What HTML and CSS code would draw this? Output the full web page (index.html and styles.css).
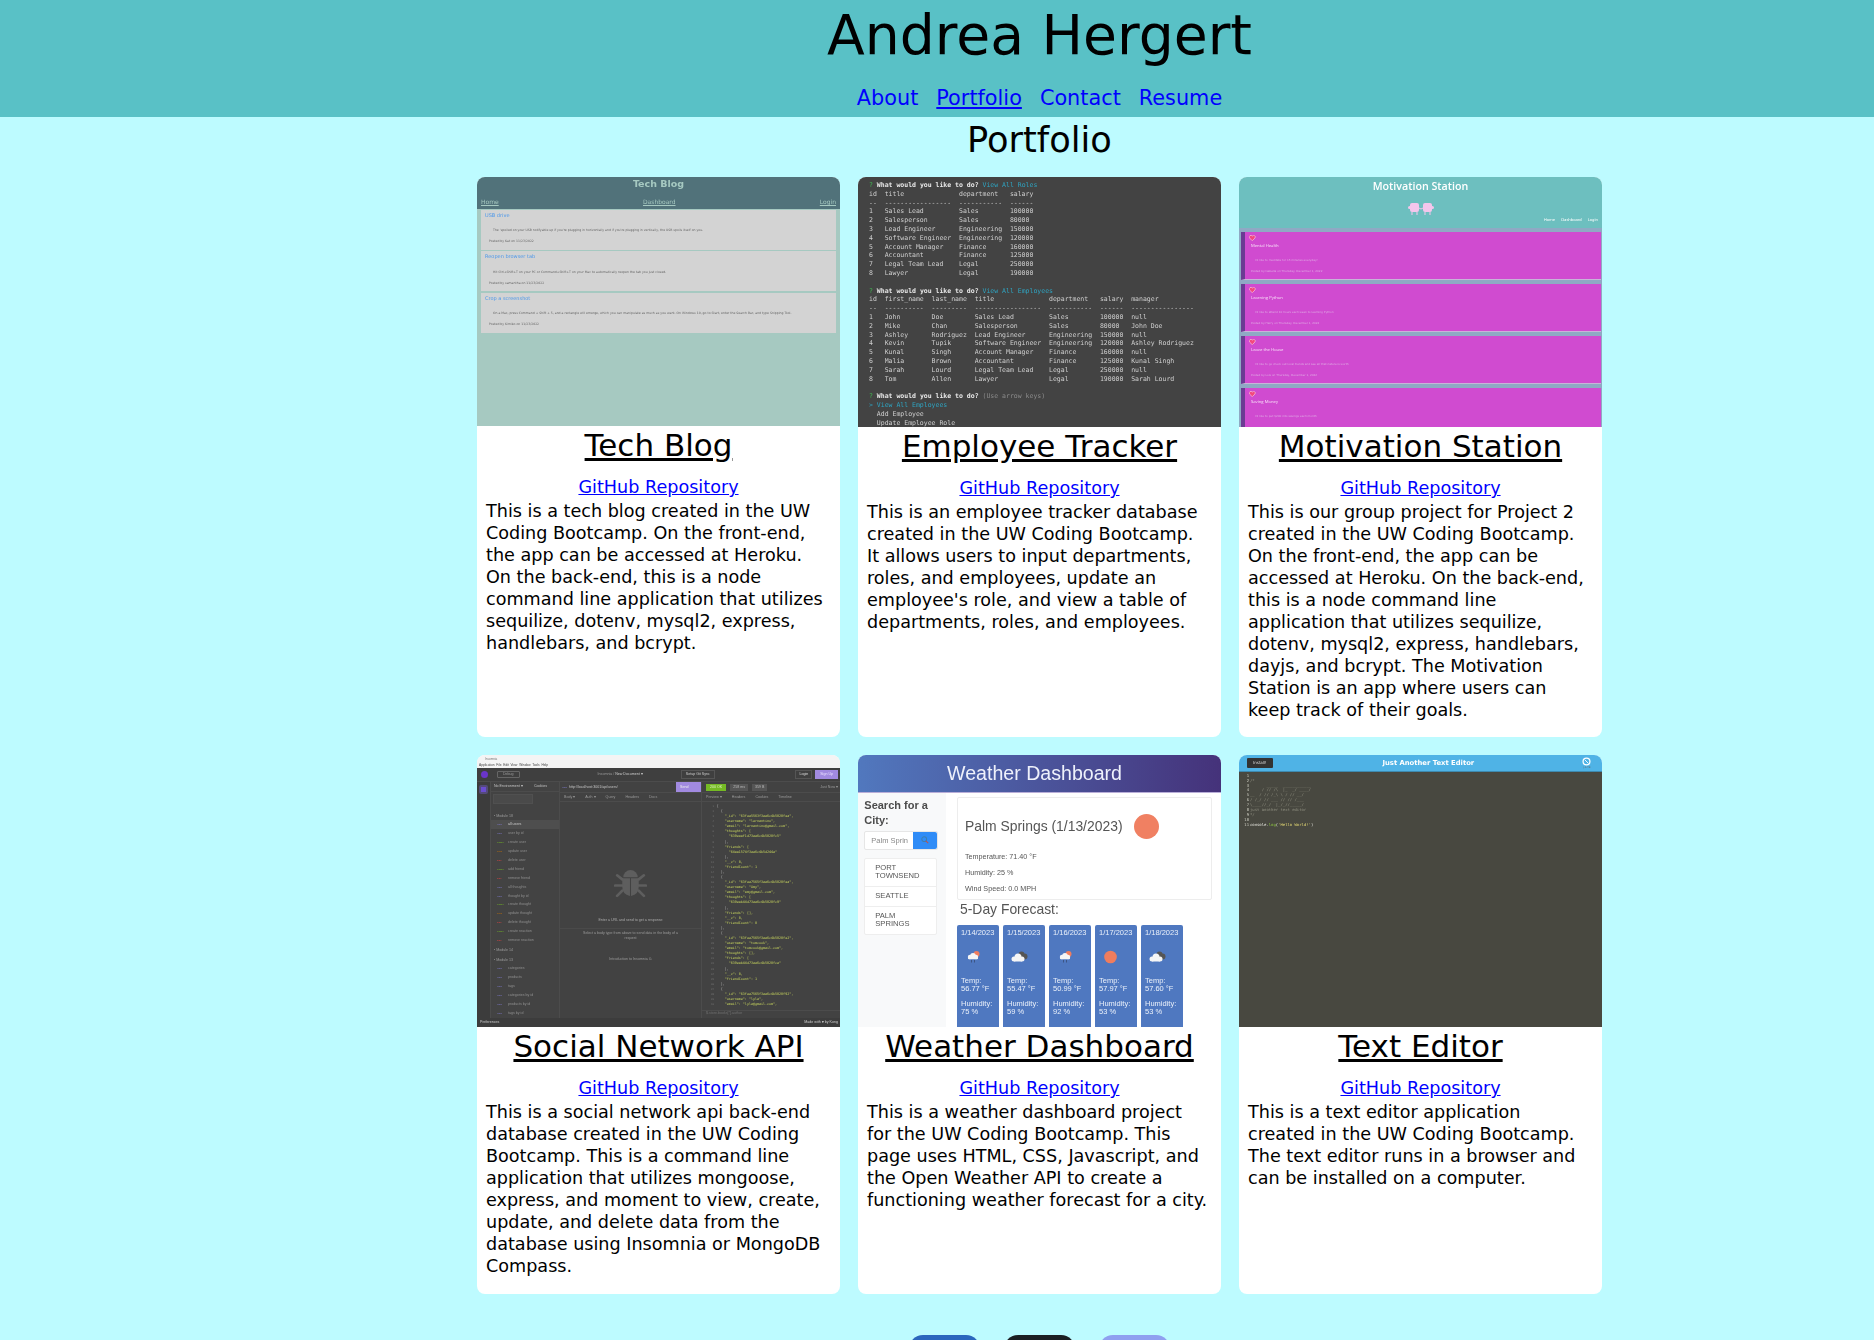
FILE: index.html
```html
<!DOCTYPE html>
<html lang="en">
<head>
<meta charset="utf-8">
<title>Andrea Hergert</title>
<link rel="stylesheet" href="styles.css">
</head>
<body>
<header class="site-header">
  <h1 class="site-name">Andrea Hergert</h1>
  <nav class="site-nav">
    <a href="#about">About</a>
    <a href="#portfolio" class="current">Portfolio</a>
    <a href="#contact">Contact</a>
    <a href="#resume">Resume</a>
  </nav>
</header>
<main class="content">
  <h2 class="section-title">Portfolio</h2>
  <section class="grid">

    <article class="card">
      <div class="shot blog shot-a">
        <div class="blog-head">
          <div class="blog-title">Tech Blog</div>
          <div class="blog-nav"><span>Home</span><span>Dashboard</span><span>Login</span></div>
        </div>
        <div class="blog-posts">
          <div class="blog-post"><div class="blog-post-title">USB drive</div><p class="blog-post-text">The ‘spoiled on your USB notifyable up if you're plugging in horizontally and if you're plugging in vertically, the USB spoils itself on you.</p><p class="blog-post-by">Posted by Kat on 11/23/2022</p></div>
          <div class="blog-post"><div class="blog-post-title">Reopen browser tab</div><p class="blog-post-text">Hit Ctrl+Shift+T on your PC or Command+Shift+T on your Mac to automatically reopen the tab you just closed.</p><p class="blog-post-by">Posted by samantha on 11/23/2022</p></div>
          <div class="blog-post"><div class="blog-post-title">Crop a screenshot</div><p class="blog-post-text">On a Mac, press Command + Shift + 5, and a rectangle will emerge, which you can manipulate as much as you want. On Windows 10, go to Start, enter the Search Bar, and type Snipping Tool.</p><p class="blog-post-by">Posted by Kimiko on 11/23/2022</p></div>
        </div>
      </div>
      <h3 class="card-title"><a href="#tech-blog">Tech Blog</a></h3>
      <a class="repo" href="#repo">GitHub Repository</a>
      <p class="card-text">This is a tech blog created in the UW Coding Bootcamp. On the front-end, the app can be accessed at Heroku. On the back-end, this is a node command line application that utilizes sequilize, dotenv, mysql2, express, handlebars, and bcrypt.</p>
    </article>

    <article class="card">
      <div class="shot term"><pre class="term-text"><span class="g">?</span> <b>What would you like to do?</b> <span class="c">View All Roles</span>
id  title              department   salary
--  -----------------  -----------  ------
1   Sales Lead         Sales        100000
2   Salesperson        Sales        80000
3   Lead Engineer      Engineering  150000
4   Software Engineer  Engineering  120000
5   Account Manager    Finance      160000
6   Accountant         Finance      125000
7   Legal Team Lead    Legal        250000
8   Lawyer             Legal        190000

<span class="g">?</span> <b>What would you like to do?</b> <span class="c">View All Employees</span>
id  first_name  last_name  title              department   salary  manager
--  ----------  ---------  -----------------  -----------  ------  ----------------
1   John        Doe        Sales Lead         Sales        100000  null
2   Mike        Chan       Salesperson        Sales        80000   John Doe
3   Ashley      Rodriguez  Lead Engineer      Engineering  150000  null
4   Kevin       Tupik      Software Engineer  Engineering  120000  Ashley Rodriguez
5   Kunal       Singh      Account Manager    Finance      160000  null
6   Malia       Brown      Accountant         Finance      125000  Kunal Singh
7   Sarah       Lourd      Legal Team Lead    Legal        250000  null
8   Tom         Allen      Lawyer             Legal        190000  Sarah Lourd

<span class="g">?</span> <b>What would you like to do?</b> <span class="m">(Use arrow keys)</span>
<span class="c">&gt; View All Employees</span>
  Add Employee
  Update Employee Role</pre></div>
      <h3 class="card-title"><a href="#employee-tracker">Employee Tracker</a></h3>
      <a class="repo" href="#repo">GitHub Repository</a>
      <p class="card-text">This is an employee tracker database created in the UW Coding Bootcamp. It allows users to input departments, roles, and employees, update an employee's role, and view a table of departments, roles, and employees.</p>
    </article>

    <article class="card">
      <div class="shot moti">
        <div class="moti-head">
          <div class="moti-title">Motivation Station</div>
          <svg class="moti-logo" viewBox="0 0 26 14" aria-hidden="true"><rect x="2" y="2" width="9" height="9" rx="2" fill="#f4c6ec"/><rect x="15" y="2" width="9" height="9" rx="2" fill="#f4c6ec"/><rect x="0" y="5" width="3" height="3" rx="1.5" fill="#f4c6ec"/><rect x="23" y="5" width="3" height="3" rx="1.5" fill="#f4c6ec"/><path d="M11 7q2 2 4 0" stroke="#f4c6ec" fill="none"/><path d="M4 11v3M9 11v3M17 11v3M22 11v3" stroke="#f4c6ec"/></svg>
          <div class="moti-nav"><span>Home</span><span>Dashboard</span><span>Login</span></div>
        </div>
        <div class="moti-list">
        <div class="moti-card"><svg class="heart" viewBox="0 0 12 11" aria-hidden="true"><path d="M6 10.5 1 5.5A3 3 0 0 1 6 2a3 3 0 0 1 5 3.500Z" fill="#f2487e" stroke="#f8cde6" stroke-width="1.200"/></svg><div class="moti-name">Mental Health</div><p class="moti-text">I'd like to meditate for 15 minutes everyday!</p><p class="moti-by">Posted by Isabella on Thursday, December 1, 2022</p></div>
        <div class="moti-card"><svg class="heart" viewBox="0 0 12 11" aria-hidden="true"><path d="M6 10.5 1 5.5A3 3 0 0 1 6 2a3 3 0 0 1 5 3.500Z" fill="#f2487e" stroke="#f8cde6" stroke-width="1.200"/></svg><div class="moti-name">Learning Python</div><p class="moti-text">I'd like to attend 10 hours each week to learning Python</p><p class="moti-by">Posted by Harry on Thursday, December 1, 2022</p></div>
        <div class="moti-card"><svg class="heart" viewBox="0 0 12 11" aria-hidden="true"><path d="M6 10.5 1 5.5A3 3 0 0 1 6 2a3 3 0 0 1 5 3.500Z" fill="#f2487e" stroke="#f8cde6" stroke-width="1.200"/></svg><div class="moti-name">Leave the House</div><p class="moti-text">I'd like to go check out local trends and see all that nature is worth</p><p class="moti-by">Posted by Lois on Thursday, December 1, 2022</p></div>
        <div class="moti-card"><svg class="heart" viewBox="0 0 12 11" aria-hidden="true"><path d="M6 10.5 1 5.5A3 3 0 0 1 6 2a3 3 0 0 1 5 3.500Z" fill="#f2487e" stroke="#f8cde6" stroke-width="1.200"/></svg><div class="moti-name">Saving Money</div><p class="moti-text">I'd like to put $200 into savings each month</p></div>
        </div>
      </div>
      <h3 class="card-title"><a href="#motivation-station">Motivation Station</a></h3>
      <a class="repo" href="#repo">GitHub Repository</a>
      <p class="card-text">This is our group project for Project 2 created in the UW Coding Bootcamp. On the front-end, the app can be accessed at Heroku. On the back-end, this is a node command line application that utilizes sequilize, dotenv, mysql2, express, handlebars, dayjs, and bcrypt. The Motivation Station is an app where users can keep track of their goals.</p>
    </article>

    <article class="card">
      <div class="shot shot-tall ins">
        <div class="ins-title"><div class="ins-titlebar">Insomnia</div><div class="ins-menu">Application&nbsp; File&nbsp; Edit&nbsp; View&nbsp; Window&nbsp; Tools&nbsp; Help</div></div>
        <div class="ins-top"><span class="ins-logo"></span><span class="ins-pill">Debug</span><span class="ins-crumb">Insomnia / <b>New Document ▾</b></span><span class="ins-setup">Setup Git Sync</span><span class="ins-login">Login</span><span class="ins-signup">Sign Up</span></div>
        <div class="ins-body">
          <div class="ins-rail"><span class="ins-home"></span></div>
          <div class="ins-side">
            <div class="ins-env"><span>No Environment ▾</span><span>Cookies</span></div>
            <div class="ins-filter"></div>
            <div class="ins-folder">▪ Module 18</div>
            <div class="ins-row active"><i class="v">GET</i>all users</div>
            <div class="ins-row"><i class="v">GET</i>user by id</div>
            <div class="ins-row"><i class="n">POST</i>create user</div>
            <div class="ins-row"><i class="o">PUT</i>update user</div>
            <div class="ins-row"><i class="r">DEL</i>delete user</div>
            <div class="ins-row"><i class="n">POST</i>add friend</div>
            <div class="ins-row"><i class="r">DEL</i>remove friend</div>
            <div class="ins-row"><i class="v">GET</i>all thoughts</div>
            <div class="ins-row"><i class="v">GET</i>thought by id</div>
            <div class="ins-row"><i class="n">POST</i>create thought</div>
            <div class="ins-row"><i class="o">PUT</i>update thought</div>
            <div class="ins-row"><i class="r">DEL</i>delete thought</div>
            <div class="ins-row"><i class="n">POST</i>create reaction</div>
            <div class="ins-row"><i class="r">DEL</i>remove reaction</div>
            <div class="ins-folder">▪ Module 14</div>
            <div class="ins-folder">▪ Module 13</div>
            <div class="ins-row"><i class="v">GET</i>categories</div>
            <div class="ins-row"><i class="v">GET</i>products</div>
            <div class="ins-row"><i class="v">GET</i>tags</div>
            <div class="ins-row"><i class="v">GET</i>categories by id</div>
            <div class="ins-row"><i class="v">GET</i>products by id</div>
            <div class="ins-row"><i class="v">GET</i>tags by id</div>
          </div>
          <div class="ins-mid">
            <div class="ins-url"><span><i class="v">GET</i> http://localhost:3001/api/users/</span><span class="ins-send">Send</span></div>
            <div class="ins-tabs"><span>Body ▾</span><span>Auth ▾</span><span>Query</span><span>Headers</span><span>Docs</span></div>
            <div class="ins-empty">
              <svg class="ins-bug" viewBox="0 0 32 32" aria-hidden="true"><path d="M9 10a7 7 0 0 1 14 0Z" fill="#5e5e5e"/><path d="M8 11h7.500v17Q8 27 8 19Zm16 0h-7.500v17Q24 27 24 19Z" fill="#5e5e5e"/><path d="M8 12 3 8M24 12l5-4M8 18H1M24 18h7M8 23l-5 5M24 23l5 5" stroke="#5e5e5e" stroke-width="2.500" stroke-linecap="round"/></svg>
              <div class="ins-hint">Enter a URL and send to get a response</div>
              <div class="ins-sel">Select a body type from above to send data in the body of a request</div>
              <div class="ins-intro">Introduction to Insomnia ⧉</div>
            </div>
          </div>
          <div class="ins-right">
            <div class="ins-status"><span class="ins-ok">200 OK</span><span class="ins-chip">258 ms</span><span class="ins-chip">359 B</span><span class="ins-just">Just Now ▾</span></div>
            <div class="ins-tabs"><span>Preview ▾</span><span>Headers</span><span>Cookies</span><span>Timeline</span></div>
            <div class="ins-code">
              <div class="jl"><span class="jn">1</span><span>[</span></div>
              <div class="jl"><span class="jn">2</span><span>  {</span></div>
              <div class="jl"><span class="jn">3</span><span class="k">    "_id": "63fea5563f3aa6c4b5020fea",</span></div>
              <div class="jl"><span class="jn">4</span><span class="k">    "username": "lernantino",</span></div>
              <div class="jl"><span class="jn">5</span><span class="k">    "email": "lernantino@gmail.com",</span></div>
              <div class="jl"><span class="jn">6</span><span class="k">    "thoughts": [</span></div>
              <div class="jl"><span class="jn">7</span><span class="k">      "639eaaf1d73aa6c4b5020fc5"</span></div>
              <div class="jl"><span class="jn">8</span><span>    ],</span></div>
              <div class="jl"><span class="jn">9</span><span class="k">    "friends": [</span></div>
              <div class="jl"><span class="jn">10</span><span class="k">      "64aa1574f3aa6c4b5d244a"</span></div>
              <div class="jl"><span class="jn">11</span><span>    ],</span></div>
              <div class="jl"><span class="jn">12</span><span class="k">    "__v": 0,</span></div>
              <div class="jl"><span class="jn">13</span><span class="k">    "friendCount": 1</span></div>
              <div class="jl"><span class="jn">14</span><span>  },</span></div>
              <div class="jl"><span class="jn">15</span><span>  {</span></div>
              <div class="jl"><span class="jn">16</span><span class="k">    "_id": "63fea7565f3aa6c4b5020fea",</span></div>
              <div class="jl"><span class="jn">17</span><span class="k">    "username": "Amy",</span></div>
              <div class="jl"><span class="jn">18</span><span class="k">    "email": "amy@gmail.com",</span></div>
              <div class="jl"><span class="jn">19</span><span class="k">    "thoughts": [</span></div>
              <div class="jl"><span class="jn">20</span><span class="k">      "639eab44d73aa6c4b5020fc9"</span></div>
              <div class="jl"><span class="jn">21</span><span>    ],</span></div>
              <div class="jl"><span class="jn">22</span><span class="k">    "friends": [],</span></div>
              <div class="jl"><span class="jn">23</span><span class="k">    "__v": 0,</span></div>
              <div class="jl"><span class="jn">24</span><span class="k">    "friendCount": 0</span></div>
              <div class="jl"><span class="jn">25</span><span>  },</span></div>
              <div class="jl"><span class="jn">26</span><span>  {</span></div>
              <div class="jl"><span class="jn">27</span><span class="k">    "_id": "63fea7565f3aa6c4b5020fe2",</span></div>
              <div class="jl"><span class="jn">28</span><span class="k">    "username": "tomcook",</span></div>
              <div class="jl"><span class="jn">29</span><span class="k">    "email": "tomcook@gmail.com",</span></div>
              <div class="jl"><span class="jn">30</span><span class="k">    "thoughts": [],</span></div>
              <div class="jl"><span class="jn">31</span><span class="k">    "friends": [</span></div>
              <div class="jl"><span class="jn">32</span><span class="k">      "639eab44d73aa6c4b5020fca"</span></div>
              <div class="jl"><span class="jn">33</span><span>    ],</span></div>
              <div class="jl"><span class="jn">34</span><span class="k">    "__v": 0,</span></div>
              <div class="jl"><span class="jn">35</span><span class="k">    "friendCount": 1</span></div>
              <div class="jl"><span class="jn">36</span><span>  },</span></div>
              <div class="jl"><span class="jn">37</span><span>  {</span></div>
              <div class="jl"><span class="jn">38</span><span class="k">    "_id": "63fea7565f3aa6c4b5020f92",</span></div>
              <div class="jl"><span class="jn">39</span><span class="k">    "username": "lyla",</span></div>
              <div class="jl"><span class="jn">40</span><span class="k">    "email": "lyla@gmail.com",</span></div>
            </div>
            <div class="ins-query">$.store.books[*].author</div>
          </div>
        </div>
        <div class="ins-foot"><span>Preferences</span><span>Made with ♥ by Kong</span></div>
      </div>
      <h3 class="card-title"><a href="#social-network-api">Social Network API</a></h3>
      <a class="repo" href="#repo">GitHub Repository</a>
      <p class="card-text">This is a social network api back-end database created in the UW Coding Bootcamp. This is a command line application that utilizes mongoose, express, and moment to view, create, update, and delete data from the database using Insomnia or MongoDB Compass.</p>
    </article>

    <article class="card">
      <div class="shot shot-tall wx">
        <div class="wx-head">Weather Dashboard</div>
        <div class="wx-body">
          <aside class="wx-side">
            <div class="wx-search">Search for a City:</div>
            <div class="wx-input"><span class="wx-field">Palm Sprin</span><span class="wx-btn"><svg viewBox="0 0 10 10" aria-hidden="true"><circle cx="4" cy="4" r="3" fill="none" stroke="#3c7fb0" stroke-width="1.300"/><path d="m6 6 3 3" stroke="#c0504d" stroke-width="1.300"/></svg></span></div>
            <ul class="wx-list"><li>PORT TOWNSEND</li><li>SEATTLE</li><li>PALM SPRINGS</li></ul>
          </aside>
          <div class="wx-main">
            <div class="wx-now">
              <div class="wx-city"><span>Palm Springs (1/13/2023)</span><span class="wx-sun"></span></div>
              <p>Temperature: 71.40 °F</p><p>Humidity: 25 %</p><p>Wind Speed: 0.0 MPH</p>
            </div>
            <div class="wx-five">5-Day Forecast:</div>
            <div class="wx-days">
              <div class="wx-day"><div>1/14/2023</div><svg class="wx-ico" viewBox="0 0 18 14" aria-hidden="true"><circle cx="11.500" cy="4" r="3" fill="#ef7d5e"/><circle cx="5" cy="7" r="2.200" fill="#f5f5f5"/><circle cx="8" cy="5.800" r="2.800" fill="#f5f5f5"/><circle cx="11" cy="7" r="2.200" fill="#f5f5f5"/><rect x="3" y="6.500" width="10" height="2.700" rx="1" fill="#f5f5f5"/><path d="M6.500 10v2.500M9.500 10v2.500" stroke="#33466b" stroke-width=".7"/></svg><p>Temp:<br>56.77 °F</p><p>Humidity:<br>75 %</p></div>
              <div class="wx-day"><div>1/15/2023</div><svg class="wx-ico" viewBox="0 0 18 14" aria-hidden="true"><circle cx="10.500" cy="4.500" r="3" fill="#555"/><circle cx="13.500" cy="6.500" r="3" fill="#555"/><circle cx="3" cy="9" r="2.500" fill="#f5f5f5"/><circle cx="7" cy="7" r="3.500" fill="#f5f5f5"/><circle cx="11" cy="9" r="2.500" fill="#f5f5f5"/><rect x="3" y="8" width="8" height="3.500" fill="#f5f5f5"/></svg><p>Temp:<br>55.47 °F</p><p>Humidity:<br>59 %</p></div>
              <div class="wx-day"><div>1/16/2023</div><svg class="wx-ico" viewBox="0 0 18 14" aria-hidden="true"><circle cx="11.500" cy="4" r="3" fill="#ef7d5e"/><circle cx="5" cy="7" r="2.200" fill="#f5f5f5"/><circle cx="8" cy="5.800" r="2.800" fill="#f5f5f5"/><circle cx="11" cy="7" r="2.200" fill="#f5f5f5"/><rect x="3" y="6.500" width="10" height="2.700" rx="1" fill="#f5f5f5"/><path d="M6.500 10v2.500M9.500 10v2.500" stroke="#33466b" stroke-width=".7"/></svg><p>Temp:<br>50.99 °F</p><p>Humidity:<br>92 %</p></div>
              <div class="wx-day"><div>1/17/2023</div><svg class="wx-ico" viewBox="0 0 18 14" aria-hidden="true"><circle cx="7.500" cy="7" r="6.300" fill="#ef7d5e"/></svg><p>Temp:<br>57.97 °F</p><p>Humidity:<br>53 %</p></div>
              <div class="wx-day"><div>1/18/2023</div><svg class="wx-ico" viewBox="0 0 18 14" aria-hidden="true"><circle cx="10.500" cy="4.500" r="3" fill="#555"/><circle cx="13.500" cy="6.500" r="3" fill="#555"/><circle cx="3" cy="9" r="2.500" fill="#f5f5f5"/><circle cx="7" cy="7" r="3.500" fill="#f5f5f5"/><circle cx="11" cy="9" r="2.500" fill="#f5f5f5"/><rect x="3" y="8" width="8" height="3.500" fill="#f5f5f5"/></svg><p>Temp:<br>57.60 °F</p><p>Humidity:<br>53 %</p></div>
            </div>
          </div>
        </div>
      </div>
      <h3 class="card-title"><a href="#weather-dashboard">Weather Dashboard</a></h3>
      <a class="repo" href="#repo">GitHub Repository</a>
      <p class="card-text">This is a weather dashboard project for the UW Coding Bootcamp. This page uses HTML, CSS, Javascript, and the Open Weather API to create a functioning weather forecast for a city.</p>
    </article>

    <article class="card">
      <div class="shot shot-tall jate">
        <div class="jate-head"><span class="jate-install">Install!</span><span class="jate-title">Just Another Text Editor</span><span class="jate-logo"><svg viewBox="0 0 10 10" aria-hidden="true"><circle cx="5" cy="5" r="3.800" fill="none" stroke="#fff" stroke-width="1.400"/><path d="M3 3l4 4" stroke="#fff"/></svg><i>J.A.T.E</i></span></div>
        <div class="jate-code"><pre class="jate-gutter">1
2
3
4
5
6
7
8
9
10
11</pre><pre class="jate-text"> 
<span class="dim">/*
       _____  ____________
     / // /\  |_  _/ ____/
__  / // /_\ \ / // __/
/ /_/ // ___ // // /___
\____//_/  |_/_//_____/
just another text editor
*/</span>

console.<span class="lg">log</span>(<span class="st">'Hello World!'</span>)</pre></div>
      </div>
      <h3 class="card-title"><a href="#text-editor">Text Editor</a></h3>
      <a class="repo" href="#repo">GitHub Repository</a>
      <p class="card-text">This is a text editor application created in the UW Coding Bootcamp. The text editor runs in a browser and can be installed on a computer.</p>
    </article>
  </section>
  <footer class="foot">
    <a class="foot-btn li" href="#linkedin" aria-label="LinkedIn"></a>
    <a class="foot-btn gh" href="#github" aria-label="GitHub"></a>
    <a class="foot-btn dc" href="#discord" aria-label="Discord"></a>
  </footer>
</main>
</body>
</html>
```

FILE: styles.css
```css
* { box-sizing: border-box; }
html, body { margin: 0; padding: 0; }
body { background: #bdfbff; font-family: "DejaVu Sans", sans-serif; color: #000; font-size: 17.600px; line-height: 22px; }
.site-header { background: #59c1c6; height: 117px; padding-left: 205px; padding-top: 1px; text-align: center; }
.site-name { margin: 0; font-size: 55.200px; line-height: 68px; font-weight: 400; }
.site-nav { display: flex; justify-content: center; gap: 18px; margin-top: 16px; font-size: 20.800px; line-height: 26px; }
.site-nav a { color: #0000ff; text-decoration: none; }
.site-nav a.current { text-decoration: underline; }
.content { padding-left: 205px; }
.section-title { margin: 0; height: 60px; padding-top: 3px; text-align: center; font-size: 35.200px; line-height: 40px; font-weight: 400; }
.grid { display: grid; grid-template-columns: repeat(3, 363px); gap: 18px; justify-content: center; }
.card { display: flex; flex-direction: column; background: #fff; border-radius: 8px; overflow: hidden; text-align: center; padding-bottom: 16px; }
.card-title { margin: 0; font-size: 31px; line-height: 38px; font-weight: 400; }
.card-title a { color: #000; }
.repo { display: block; margin-top: 12px; margin-bottom: 2px; color: #0000ff; font-size: 17.600px; line-height: 22px; text-align: center; }
.card-text { margin: 0; padding: 0 11px 0 9px; text-align: left; }
.shot-tall ~ .card-text { margin-bottom: 1px; }

.shot { height: 250px; overflow: hidden; flex: none; filter: blur(.35px); text-align: left; }
.shot-a { height: 249px; }
.shot-tall { height: 272px; }

.blog { background: #a6c9c1; }
.blog-head { height: 32px; background: #51727a; color: #a6c9c1; }
.blog-title { text-align: center; font-size: 9.500px; line-height: 13px; font-weight: 700; }
.blog-nav { display: flex; justify-content: space-between; padding: 8px 4px 0; font-size: 6px; line-height: 8px; text-decoration: underline; }
.blog-posts { display: flex; flex-direction: column; gap: 1.500px; padding: .5px 4px 0; }
.blog-post { height: 40px; background: #d3d3d3; padding: 1px 4px 0; color: #666; }
.blog-post-title { color: #4b97ea; font-size: 5px; line-height: 8px; }
.blog-post-text { margin: 8.500px 0 0 8px; font-size: 3.100px; line-height: 6px; white-space: nowrap; }
.blog-post-by { margin: 5.300px 0 0 4px; font-size: 3.100px; line-height: 6px; }

.term { background: #434343; }
.term-text { margin: 0; padding: 4px 0 0 11px; color: #cfcfcf; font-family: "DejaVu Sans Mono", monospace; font-size: 6.500px; line-height: 8.800px; }
.term-text b { color: #e8e8e8; }
.term-text .g { color: #3fb950; }
.term-text .c { color: #2fa3c0; }
.term-text .m { color: #8b8b8b; }

.moti { background: #8fa9c4; }
.moti-head { height: 51px; background: #6dbfbf; color: #fff; display: flex; flex-direction: column; align-items: center; }
.moti-title { font-family: "Open Sans", sans-serif; font-size: 10.700px; line-height: 14px; font-weight: 600; margin-top: 2px; }
.moti-logo { width: 26px; height: 14px; margin-top: 8px; }
.moti-nav { align-self: flex-end; display: flex; gap: 6px; padding-right: 4px; margin-top: 1px; font-size: 3.800px; line-height: 8px; }
.moti-list { display: flex; flex-direction: column; gap: 4px; padding: 3.700px 1px 0 2px; }
.moti-card { height: 48px; flex: none; background: #d04bd0; border-left: 4px solid #6b3b93; border-bottom: 1px solid #c8b4d8; padding: 3px 0 0 4px; color: #dfaae4; overflow: hidden; }
.heart { display: block; width: 6.500px; height: 6px; }
.moti-name { margin: 1px 0 0 2px; font-family: "Open Sans", sans-serif; font-size: 4.200px; line-height: 7px; color: #f8e4f8; }
.moti-text { margin: 9px 0 0 6px; font-size: 2.800px; line-height: 5px; }
.moti-by { margin: 6.300px 0 0 2px; font-size: 2.800px; line-height: 5px; }

.ins { display: flex; flex-direction: column; background: #424242; color: #9a9a9a; font-family: "Liberation Sans", sans-serif; font-size: 3.600px; line-height: 5px; }
.ins-title { height: 13px; background: #f4f4f4; color: #777; flex: none; }
.ins-titlebar { height: 7px; padding: 1px 0 0 8px; line-height: 6px; font-size: 3px; }
.ins-menu { padding-left: 2px; font-size: 3.200px; line-height: 6px; color: #444; }
.ins-top { height: 14px; flex: none; display: flex; align-items: center; gap: 8px; padding: 0 2px 0 2px; background: #3f3f3f; border-bottom: 1px solid #4c4c4c; }
.ins-logo { width: 7px; height: 7px; border-radius: 50%; background: #6a35c9; flex: none; margin-left: 2px; }
.ins-pill { border: 1px solid #666; padding: 0 5px; border-radius: 1px; margin-left: 1px; }
.ins-crumb { margin-left: 70px; }
.ins-crumb b { color: #ccc; font-weight: 400; }
.ins-setup { border: 1px solid #555; padding: 1px 4px; margin-left: 30px; color: #ccc; }
.ins-login { margin-left: auto; border: 1px solid #555; padding: 1px 3px; color: #ddd; }
.ins-signup { background: #a18ae0; color: #e8e0ff; padding: 2px 5px; margin-left: -5px; }
.ins-body { flex: 1; min-height: 0; display: grid; grid-template-columns: 14px 69px 142px 138px; }
.ins-rail { background: #3c3c3c; border-right: 1px solid #4c4c4c; padding: 3px 2px; }
.ins-home { display: block; width: 9px; height: 9px; background: #6a4dd0; border-radius: 2px; border: 2px solid #544a7a; }
.ins-side { overflow: hidden; border-right: 1px solid #4c4c4c; background: #434343; }
.ins-env { height: 10px; display: flex; justify-content: space-between; align-items: center; padding: 0 12px 0 3px; color: #c4c4c4; border-bottom: 1px solid #4c4c4c; }
.ins-filter { height: 10px; width: 40px; margin: 2px 0 6.500px 2px; background: #4a4a4a; border: 1px solid #505050; }
.ins-folder { height: 9.500px; line-height: 10px; padding-left: 3px; color: #9a9a9a; }
.ins-row { height: 8.950px; line-height: 9px; padding-left: 6px; color: #8f8f8f; display: flex; gap: 5px; }
.ins-row.active { background: #4e4e4e; color: #ccc; }
.ins i { font-style: normal; font-size: 2.500px; width: 6px; flex: none; }
.ins-url i { display: inline-block; }
.ins .v { color: #7d78c8; }
.ins .n { color: #75ba24; }
.ins .o { color: #d07502; }
.ins .r { color: #d04444; }
.ins-mid { display: flex; flex-direction: column; overflow: hidden; border-right: 1px solid #4c4c4c; }
.ins-url { height: 10px; flex: none; display: flex; justify-content: space-between; align-items: center; padding-left: 2px; color: #c4c4c4; }
.ins-send { height: 10px; width: 25px; background: #a18ae0; color: #eee; line-height: 10px; padding-left: 4px; }
.ins-tabs { height: 10px; flex: none; display: flex; gap: 10px; align-items: center; padding: 0 4px; border-bottom: 1px solid #4c4c4c; border-top: 1px solid #4c4c4c; }
.ins-empty { flex: 1; display: flex; flex-direction: column; align-items: center; text-align: center; }
.ins-bug { width: 33px; height: 33px; margin-top: 65px; flex: none; }
.ins-hint { margin-top: 18px; color: #aaa; width: 100%; padding-bottom: 5px; border-bottom: 1px solid #4a4a4a; }
.ins-sel { margin-top: 2px; width: 105px; }
.ins-intro { margin-top: 16px; }
.ins-right { display: flex; flex-direction: column; overflow: hidden; min-height: 0; }
.ins-status { height: 10px; flex: none; display: flex; align-items: center; gap: 4px; padding: 0 2px 0 4px; }
.ins-ok { background: #75ba24; color: #dff3c4; padding: 1px 4px; }
.ins-chip { background: #555; color: #bbb; padding: 1px 3px; }
.ins-just { margin-left: auto; }
.ins-code { flex: 1; min-height: 0; padding: 2px 0 0 4px; overflow: hidden; font-family: "DejaVu Sans Mono", monospace; font-size: 3.350px; color: #b9b9b9; }
.jl { display: flex; gap: 2.700px; height: 5.090px; line-height: 5.090px; white-space: pre; }
.jn { width: 8px; flex: none; text-align: right; font-size: 2.400px; color: #777; }
.k { color: #c9d75e; }
.ins-query { height: 8px; flex: none; padding-left: 4px; color: #707070; border-top: 1px solid #4c4c4c; }
.ins-foot { height: 9px; flex: none; display: flex; justify-content: space-between; align-items: center; padding: 0 2px 0 3px; background: #3c3c3c; color: #ccc; }

.wx { display: flex; flex-direction: column; background: #fff; color: #555; font-family: "Liberation Sans", sans-serif; font-size: 7.200px; line-height: 8px; }
.wx-head { height: 37.500px; flex: none; background: linear-gradient(90deg, #5178be, #45327a); border-bottom: 1px solid #b9aed8; color: #eef1fb; font-size: 19.600px; line-height: 36px; text-align: center; padding-right: 10px; }
.wx-body { flex: 1; min-height: 0; display: grid; grid-template-columns: 88px 1fr; }
.wx-side { background: #f8f9fa; padding: 5.700px 7px 0 6.300px; }
.wx-search { font-size: 11px; line-height: 14.700px; font-weight: 700; color: #4c4c4c; }
.wx-input { display: flex; height: 18.600px; margin-top: 3.500px; border: 1px solid #e6e6e6; background: #fff; border-radius: 2px; width: 74px; }
.wx-field { flex: 1; padding-left: 6px; line-height: 17px; color: #8a8a8a; font-size: 7.500px; overflow: hidden; white-space: nowrap; }
.wx-btn { width: 24px; background: #2f8cf7; display: flex; align-items: center; justify-content: center; border-radius: 0 2px 2px 0; }
.wx-btn svg { width: 8px; height: 8px; }
.wx-list { list-style: none; margin: 8px 0 0; padding: 0; width: 73px; background: #fff; border: 1px solid #eee; border-radius: 2px; }
.wx-list li { padding: 5.500px 14px 5.500px 10px; border-top: 1px solid #eee; font-size: 7.600px; line-height: 8px; color: #555; }
.wx-list li:first-child { border-top: 0; }
.wx-main { padding: 4px 9px 0 11px; min-width: 0; }
.wx-now { height: 103px; border: 1px solid #ededed; border-radius: 2px; padding: 16px 7px 0; }
.wx-now p { margin: 0 0 8px; }
.wx-city { display: flex; align-items: center; gap: 11px; font-size: 13.900px; line-height: 25px; margin-bottom: 14px; }
.wx-sun { width: 25px; height: 25px; border-radius: 50%; background: #f08062; }
.wx-five { margin: 1px 0 0 3px; height: 24px; font-size: 13.900px; line-height: 17px; }
.wx-days { display: flex; gap: 4px; }
.wx-day { width: 42px; height: 110px; padding: 4px 0 0 4px; background: #4f78c0; border-radius: 2px; color: #eaf0fa; font-size: 7.500px; flex: none; white-space: nowrap; }
.wx-day p { margin: 0 0 7.300px; }
.wx-ico { display: block; width: 18px; height: 14px; margin: 13.700px 0 13px 4px; }

.jate { display: flex; flex-direction: column; background: #484840; }
.jate-head { height: 16.700px; flex: none; display: flex; align-items: center; justify-content: space-between; padding: 0 8px; background: #4fb3e6; border-bottom: 1px solid #3e8ab0; color: #fff; font-family: "DejaVu Sans", sans-serif; }
.jate-install { background: #333; color: #ddd; font-size: 4px; line-height: 10px; padding: 0 6px; border-radius: 1px; }
.jate-title { font-size: 6.800px; font-weight: 700; margin-left: 4px; }
.jate-logo { width: 14px; display: flex; flex-direction: column; align-items: center; }
.jate-logo svg { width: 9px; height: 9px; }
.jate-logo i { font-style: normal; font-size: 2.400px; line-height: 3px; color: #666; }
.jate-code { display: flex; gap: 1px; padding: 2px 0 0 1px; }
.jate-code pre { margin: 0; font-family: "DejaVu Sans Mono", monospace; font-size: 3.900px; line-height: 4.900px; }
.jate-gutter { text-align: right; color: #d0d0c4; width: 9px; }
.jate-text { color: #e8e8e0; }
.jate-text .dim { color: #8f8f80; }
.jate-text .lg { color: #8cc63f; }
.jate-text .st { color: #e6db74; }

.foot { display: flex; justify-content: center; gap: 24px; margin-top: 41px; padding-bottom: 20px; }
.foot-btn { width: 71px; height: 40px; border-radius: 14px; }
.foot-btn.li { background: #2a66bd; }
.foot-btn.gh { background: #1b1f23; }
.foot-btn.dc { background: #8f9ff0; }
```
